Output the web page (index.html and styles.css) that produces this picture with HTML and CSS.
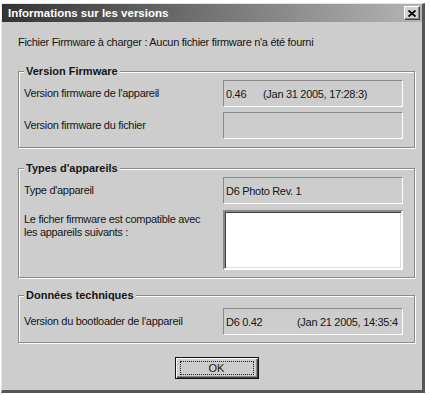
FILE: index.html
```html
<!DOCTYPE html>
<html lang="fr">
<head>
    <meta charset="UTF-8">
    <meta name="viewport" content="width=device-width, initial-scale=1.0">
    <title>Informations sur les versions</title>
    <link rel="stylesheet" href="styles.css">
</head>
<body>
<div class="dialog">
    <div class="titlebar">
        <span class="title">Informations sur les versions</span>
        <button class="close-btn" type="button" aria-label="Fermer">
            <svg width="8" height="7" viewBox="0 0 8 7">
                <path d="M0.5 0.5 L7.5 6.5 M7.5 0.5 L0.5 6.5" stroke="#000" stroke-width="1.8" fill="none"/>
            </svg>
        </button>
    </div>

    <div class="content">
        <p class="file-line">Fichier Firmware à charger : Aucun fichier firmware n'a été fourni</p>

        <div class="group">
            <span class="group-title">Version Firmware</span>
            <div class="row">
                <span class="label">Version firmware de l'appareil</span>
                <div class="field"><span class="ver ver-short">0.46</span><span>(Jan 31 2005, 17:28:3)</span></div>
            </div>
            <div class="row">
                <span class="label">Version firmware du fichier</span>
                <div class="field"></div>
            </div>
        </div>

        <div class="group group-types">
            <span class="group-title">Types d'appareils</span>
            <div class="row">
                <span class="label">Type d'appareil</span>
                <div class="field">D6 Photo Rev. 1</div>
            </div>
            <div class="row row-top">
                <span class="label">Le ficher firmware est compatible avec<br>les appareils suivants :</span>
                <div class="listbox"></div>
            </div>
        </div>

        <div class="group group-tech">
            <span class="group-title">Données techniques</span>
            <div class="row">
                <span class="label">Version du bootloader de l'appareil</span>
                <div class="field"><span class="ver ver-long">D6 0.42</span><span>(Jan 21 2005, 14:35:4</span></div>
            </div>
        </div>

        <div class="actions">
            <button class="ok-btn" type="button"><span>OK</span></button>
        </div>
    </div>
</div>
</body>
</html>
```

FILE: styles.css
```css
body {
    margin: 0;
    padding: 3px 0 0 1px;
    background-color: #fff;
    font-family: "Liberation Sans", Arial, sans-serif;
    font-size: 11px;
    letter-spacing: -0.3px;
    color: #151515;
}

.dialog {
    width: 420px;
    background-color: #cdcdcd;
    border-style: solid;
    border-width: 1px 3px 3px 1px;
    border-color: #e6e6e6 #555 #555 #e6e6e6;
}

.titlebar {
    height: 18px;
    display: flex;
    align-items: center;
    background: linear-gradient(to right, #333, #b5b5b5);
    color: #fff;
}
.title {
    flex: 1;
    padding-left: 6px;
    font-weight: bold;
    font-size: 11.5px;
    letter-spacing: 0;
}
.close-btn {
    width: 16px;
    height: 14px;
    margin-right: 2px;
    padding: 0;
    display: flex;
    align-items: center;
    justify-content: center;
    background-color: #d2d2d2;
    border: 1px solid;
    border-color: #fff #404040 #404040 #fff;
    box-shadow: inset -1px -1px 0 #888;
}

.content {
    padding: 14px 7px 11px 16px;
}
.file-line {
    margin: 0 0 22px;
    line-height: 13px;
}

.group {
    position: relative;
    display: flex;
    flex-direction: column;
    gap: 5px;
    padding: 8px 11px 8px 5px;
    border: 1px solid #8a8a8a;
    box-shadow: inset 1px 1px 0 #fff, 1px 1px 0 #fff;
}
.group-types {
    margin-top: 20px;
    gap: 6px;
    padding-bottom: 7px;
}
.group-tech {
    margin-top: 17px;
    padding-top: 12px;
    padding-bottom: 7px;
}
.group-title {
    position: absolute;
    top: -8px;
    left: 5px;
    padding: 0 2px;
    line-height: 14px;
    background-color: #cdcdcd;
    font-weight: bold;
    letter-spacing: 0;
}

.row {
    display: flex;
    align-items: center;
}
.row-top {
    align-items: flex-start;
}
.label {
    flex: 1;
    line-height: 13px;
}
.row-top .label {
    padding-top: 3px;
}

.field {
    width: 180px;
    height: 27px;
    box-sizing: border-box;
    display: flex;
    align-items: center;
    padding-left: 2px;
    border: 1px solid;
    border-color: #8a8a8a #fff #fff #8a8a8a;
    white-space: nowrap;
    overflow: hidden;
}
.ver {
    flex-shrink: 0;
}
.ver-short {
    width: 37px;
}
.ver-long {
    width: 71px;
}

.listbox {
    width: 180px;
    height: 60px;
    box-sizing: border-box;
    background-color: #fff;
    border: 2px solid;
    border-color: #888 #fff #fff #888;
    box-shadow: inset 1px 1px 0 #404040, inset -1px -1px 0 #dcdcdc;
}

.actions {
    display: flex;
    justify-content: center;
    margin-top: 14px;
}
.ok-btn {
    width: 84px;
    height: 22px;
    padding: 0 4px;
    display: flex;
    align-items: center;
    font: inherit;
    color: inherit;
    background-color: #cdcdcd;
    border: 1px solid #111;
    box-shadow: inset 1px 1px 0 #fff, inset -1px -1px 0 #404040, inset -2px -2px 0 #888;
}
.ok-btn span {
    flex: 1;
    height: 12px;
    line-height: 12px;
    text-align: center;
    border: 1px dotted #222;
}
```
